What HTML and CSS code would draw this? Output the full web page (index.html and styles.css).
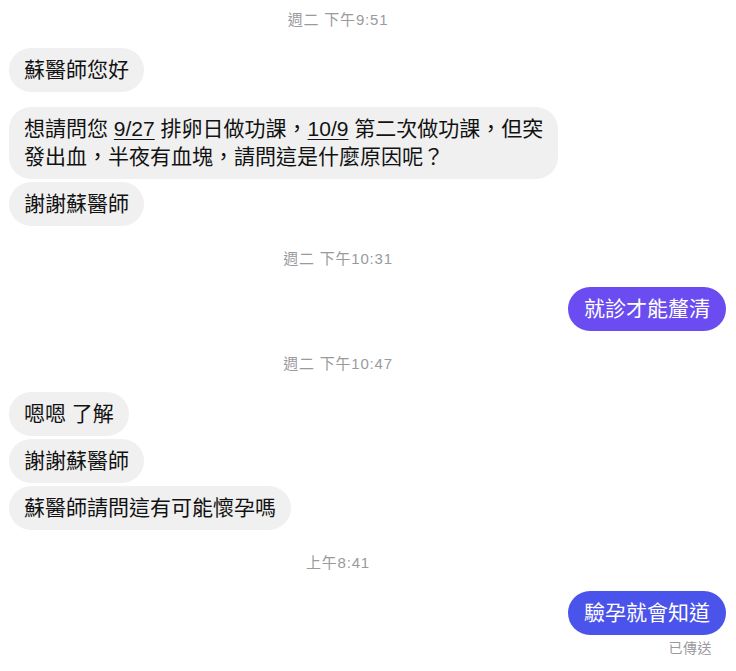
FILE: index.html
```html
<!DOCTYPE html>
<html lang="zh-Hant">
<head>
<meta charset="utf-8">
<link rel="stylesheet" href="styles.css">
</head>
<body>
<div class="chat">
  <div class="stamp first">週二 下午9:51</div>
  <div class="row in"><div class="bubble">蘇醫師您好</div></div>
  <div class="row in group"><div class="bubble">想請問您 <span class="link">9/27</span> 排卵日做功課，<span class="link">10/9</span> 第二次做功課，但突<br>發出血，半夜有血塊，請問這是什麼原因呢？</div></div>
  <div class="row in tight"><div class="bubble">謝謝蘇醫師</div></div>

  <div class="stamp">週二 下午10:31</div>
  <div class="row out"><div class="bubble sent purple">就診才能釐清</div></div>

  <div class="stamp">週二 下午10:47</div>
  <div class="row in"><div class="bubble">嗯嗯 了解</div></div>
  <div class="row in tight"><div class="bubble">謝謝蘇醫師</div></div>
  <div class="row in tight"><div class="bubble">蘇醫師請問這有可能懷孕嗎</div></div>

  <div class="stamp">上午8:41</div>
  <div class="row out"><div class="bubble sent blue">驗孕就會知道</div></div>
  <div class="status">已傳送</div>
</div>
</body>
</html>
```

FILE: styles.css
```css
html, body {
  margin: 0;
  padding: 0;
  background: #ffffff;
}
body {
  font-family: "Liberation Sans", "Noto Sans CJK TC", sans-serif;
  color: #111111;
}
.chat {
  padding: 10px 10px 0 9px;
  display: flex;
  flex-direction: column;
}
.stamp {
  font-size: 15px;
  line-height: 20px;
  letter-spacing: 0.8px;
  color: #9a9a9e;
  text-align: center;
  padding-right: 59px;
  margin-top: 23px;
  margin-bottom: 18px;
}
.stamp.first {
  margin-top: 0;
}
.row {
  display: flex;
}
.row.in {
  justify-content: flex-start;
}
.row.out {
  justify-content: flex-end;
}
.row.group {
  margin-top: 15px;
}
.row.tight {
  margin-top: 3px;
}
.bubble {
  font-size: 21px;
  line-height: 28px;
  padding: 8px 15px;
  border-radius: 22px;
  background: #f0f0f0;
  color: #121212;
  white-space: nowrap;
}
.link {
  text-decoration: underline;
  text-underline-offset: 3px;
  text-decoration-thickness: 1px;
}
.sent {
  color: #ffffff;
  padding: 8px 16px;
}
.purple {
  background: #6a4cf1;
}
.blue {
  background: #4a53ea;
}
.status {
  text-align: right;
  font-size: 14px;
  line-height: 16px;
  letter-spacing: 0.5px;
  color: #9a9a9e;
  margin-top: 5px;
  padding-right: 14px;
}
```
